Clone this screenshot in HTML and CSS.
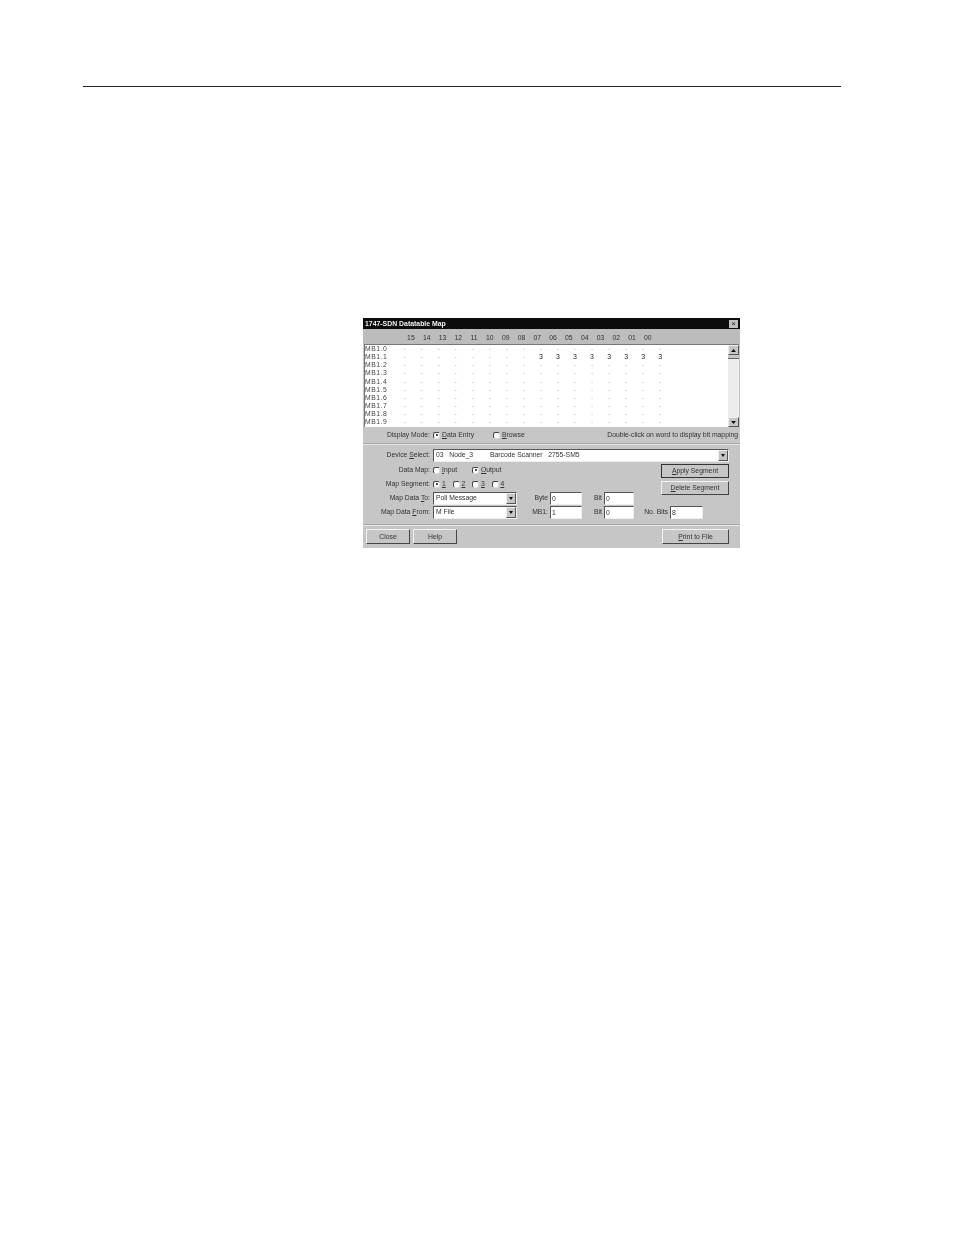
FILE: index.html
```html
<!DOCTYPE html>
<html lang="en">
<head>
<meta charset="utf-8">
<title>1747-SDN Datatable Map</title>
<link rel="stylesheet" href="styles.css">
</head>
<body>
<div class="rule"></div>
<div class="dialog">
  <div class="title"><span>1747-SDN Datatable Map</span><span class="close">×</span></div>
  <div class="head">
    <span>15</span><span>14</span><span>13</span><span>12</span><span>11</span><span>10</span><span>09</span><span>08</span><span>07</span><span>06</span><span>05</span><span>04</span><span>03</span><span>02</span><span>01</span><span>00</span>
  </div>
  <div class="list">
    <div class="rows">
      <div class="row"><span class="lab">MB1.0</span><span>-</span><span>-</span><span>-</span><span>-</span><span>-</span><span>-</span><span>-</span><span>-</span><span>-</span><span>-</span><span>-</span><span>-</span><span>-</span><span>-</span><span>-</span><span>-</span></div>
      <div class="row on"><span class="lab">MB1.1</span><span>-</span><span>-</span><span>-</span><span>-</span><span>-</span><span>-</span><span>-</span><span>-</span><b>3</b><b>3</b><b>3</b><b>3</b><b>3</b><b>3</b><b>3</b><b>3</b></div>
      <div class="row"><span class="lab">MB1.2</span><span>-</span><span>-</span><span>-</span><span>-</span><span>-</span><span>-</span><span>-</span><span>-</span><span>-</span><span>-</span><span>-</span><span>-</span><span>-</span><span>-</span><span>-</span><span>-</span></div>
      <div class="row"><span class="lab">MB1.3</span><span>-</span><span>-</span><span>-</span><span>-</span><span>-</span><span>-</span><span>-</span><span>-</span><span>-</span><span>-</span><span>-</span><span>-</span><span>-</span><span>-</span><span>-</span><span>-</span></div>
      <div class="row"><span class="lab">MB1.4</span><span>-</span><span>-</span><span>-</span><span>-</span><span>-</span><span>-</span><span>-</span><span>-</span><span>-</span><span>-</span><span>-</span><span>-</span><span>-</span><span>-</span><span>-</span><span>-</span></div>
      <div class="row"><span class="lab">MB1.5</span><span>-</span><span>-</span><span>-</span><span>-</span><span>-</span><span>-</span><span>-</span><span>-</span><span>-</span><span>-</span><span>-</span><span>-</span><span>-</span><span>-</span><span>-</span><span>-</span></div>
      <div class="row"><span class="lab">MB1.6</span><span>-</span><span>-</span><span>-</span><span>-</span><span>-</span><span>-</span><span>-</span><span>-</span><span>-</span><span>-</span><span>-</span><span>-</span><span>-</span><span>-</span><span>-</span><span>-</span></div>
      <div class="row"><span class="lab">MB1.7</span><span>-</span><span>-</span><span>-</span><span>-</span><span>-</span><span>-</span><span>-</span><span>-</span><span>-</span><span>-</span><span>-</span><span>-</span><span>-</span><span>-</span><span>-</span><span>-</span></div>
      <div class="row"><span class="lab">MB1.8</span><span>-</span><span>-</span><span>-</span><span>-</span><span>-</span><span>-</span><span>-</span><span>-</span><span>-</span><span>-</span><span>-</span><span>-</span><span>-</span><span>-</span><span>-</span><span>-</span></div>
      <div class="row"><span class="lab">MB1.9</span><span>-</span><span>-</span><span>-</span><span>-</span><span>-</span><span>-</span><span>-</span><span>-</span><span>-</span><span>-</span><span>-</span><span>-</span><span>-</span><span>-</span><span>-</span><span>-</span></div>
    </div>
    <div class="scroll">
      <div class="sbtn"><svg width="7" height="5" viewBox="0 0 7 5"><path d="M3.5 1 L6 4 H1 Z" fill="#111"/></svg></div>
      <div class="thumb"></div>
      <div class="strack"></div>
      <div class="sbtn"><svg width="7" height="5" viewBox="0 0 7 5"><path d="M1 1 H6 L3.5 4 Z" fill="#111"/></svg></div>
    </div>
  </div>

  <div class="mode">
    <span class="lbl">Display Mode:</span>
    <span class="radio dot"></span><span class="opt first"><u>D</u>ata Entry</span>
    <span class="radio"></span><span class="opt"><u>B</u>rowse</span>
    <span class="hint">Double-click on word to display bit mapping</span>
  </div>
  <div class="sep"></div>

  <div class="device">
    <span class="lbl">Device <u>S</u>elect:</span>
    <div class="combo wide"><span class="val">03&nbsp;&nbsp;&nbsp;Node_3&nbsp;&nbsp;&nbsp;&nbsp;&nbsp;&nbsp;&nbsp;&nbsp;&nbsp;Barcode Scanner&nbsp;&nbsp;&nbsp;2755-SM5</span><span class="drop"></span></div>
  </div>

  <div class="form">
    <div class="fields">
      <div class="frow">
        <span class="lbl">Data Map:</span>
        <span class="radio"></span><span class="opt w-input"><u>I</u>nput</span>
        <span class="radio dot"></span><span class="opt"><u>O</u>utput</span>
      </div>
      <div class="frow">
        <span class="lbl">Map Segment:</span>
        <span class="radio dot"></span><span class="opt seg"><u>1</u></span>
        <span class="radio"></span><span class="opt seg"><u>2</u></span>
        <span class="radio"></span><span class="opt seg"><u>3</u></span>
        <span class="radio"></span><span class="opt seg"><u>4</u></span>
      </div>
      <div class="frow ctl">
        <span class="lbl">Map Data <u>T</u>o:</span>
        <div class="combo short"><span class="val">Poll Message</span><span class="drop"></span></div>
        <span class="cap c1">Byte</span><span class="input i1">0</span>
        <span class="cap c2">Bit</span><span class="input i2">0</span>
      </div>
      <div class="frow ctl">
        <span class="lbl">Map Data <u>F</u>rom:</span>
        <div class="combo short"><span class="val">M File</span><span class="drop"></span></div>
        <span class="cap c1">MB1:</span><span class="input i1">1</span>
        <span class="cap c2">Bit</span><span class="input i2">0</span>
        <span class="cap c3">No. Bits</span><span class="input i3">8</span>
      </div>
    </div>
    <div class="actions">
      <div class="btn seg-btn default"><u>A</u>pply Segment</div>
      <div class="btn seg-btn"><u>D</u>elete Segment</div>
    </div>
  </div>
  <div class="sep low"></div>
  <div class="footer">
    <div class="btn small">Close</div>
    <div class="btn small">Help</div>
    <div class="btn print"><u>P</u>rint to File</div>
  </div>
</div>
</body>
</html>
```
FILE: styles.css
```css
html, body { margin: 0; padding: 0; background: #fff; }
body { width: 954px; height: 1235px; overflow: hidden; font-family: "Liberation Sans", Arial, sans-serif; }
.rule { width: 758px; height: 1px; margin: 86px 0 0 83px; background: #222; }
.dialog {
  width: 377px; height: 230px; margin: 231px 0 0 363px; background: #c6c6c6; color: #333;
  font-size: 6.8px; line-height: 8px; filter: blur(0.55px); box-sizing: border-box; overflow: hidden;
}
.title { height: 11px; background: #0c0c0c; color: #efefef; font-weight: 700; font-size: 6.9px; line-height: 11px; padding: 0 2px 0 2px; display: flex; justify-content: space-between; align-items: center; }
.close { width: 9px; height: 8px; background: #c0c0c0; color: #222; line-height: 8px; text-align: center; font-size: 8px; font-weight: 400; }
.head { height: 15px; padding-top: 2px; background: #bcbcbc; display: grid; grid-template-columns: repeat(16, 15.8px); padding-left: 40px; align-items: center; box-sizing: border-box; text-align: center; color: #333; }
.list { height: 83px; margin: 0 1px; background: #fff; display: flex; border-left: 1px solid #777; border-top: 1px solid #777; box-sizing: border-box; }
.rows { flex: 1; }
.row { height: 8.15px; line-height: 8.15px; display: grid; grid-template-columns: 31px repeat(16, 17.05px); text-align: center; color: #b4b4b4; font-size: 6.5px; }
.row.on b { color: #222; font-weight: 400; font-size: 7px; }
.row .lab { color: #444; text-align: left; font-size: 6.8px; letter-spacing: .55px; white-space: nowrap; }
.scroll { width: 11px; display: flex; flex-direction: column; background: #ececec; }
.sbtn { height: 10px; background: #c6c6c6; border: 1px solid; border-color: #eee #555 #555 #eee; box-sizing: border-box; display: flex; align-items: center; justify-content: center; }
.thumb { height: 3px; background: #c6c6c6; border-bottom: 1px solid #666; }
.strack { flex: 1; }
.mode { display: flex; align-items: center; height: 16px; }
.lbl { width: 67px; flex: none; text-align: right; padding-right: 3px; color: #333; white-space: nowrap; }
.radio { width: 5px; height: 5px; flex: none; background: #fff; border: 1px solid; border-color: #444 #ddd #ddd #444; border-radius: 35%; position: relative; }
.radio.dot::after { content: ""; position: absolute; left: 1.5px; top: 1.5px; width: 2px; height: 2px; background: #111; border-radius: 50%; }
.opt { margin-left: 2px; color: #333; }
.opt.first { width: 51px; }
.hint { margin-left: auto; padding-right: 2px; color: #333; white-space: nowrap; }
.sep { height: 1px; background: #e6e6e6; border-top: 1px solid #a8a8a8; }
.device { display: flex; align-items: center; height: 14px; margin-top: 3px; }
.combo { display: flex; height: 13px; background: #fff; border: 1px solid; border-color: #555 #eee #eee #555; box-sizing: border-box; align-items: center; flex: none; color: #333; }
.combo.wide { width: 296px; }
.combo.short { width: 84px; }
.val { flex: 1; padding-left: 2px; white-space: nowrap; }
.drop { width: 10px; height: 100%; background: #c6c6c6; border: 1px solid; border-color: #eee #555 #555 #eee; box-sizing: border-box; display: flex; align-items: center; justify-content: center; }
.drop::after { content: ""; border: 2.5px solid transparent; border-top: 3px solid #111; border-bottom: 0; }
.form { display: flex; margin-top: 1px; }
.fields { width: 298px; flex: none; }
.frow { display: flex; align-items: center; height: 14px; }
.frow:first-child .radio:first-of-type, .frow:nth-child(2) .radio:first-of-type { margin-left: 1px; }
.w-input { width: 30px; }
.seg { width: 10.5px; }
.cap { flex: none; text-align: right; color: #333; padding-right: 2px; box-sizing: border-box; white-space: nowrap; }
.c1 { width: 33px; }
.c2 { width: 22px; }
.c3 { width: 36px; }
.input { flex: none; height: 13px; line-height: 11px; background: #fff; border: 1px solid; border-color: #555 #eee #eee #555; box-sizing: border-box; padding-left: 1px; color: #333; }
.i1 { width: 32px; }
.i2 { width: 30px; }
.i3 { width: 33px; }
.actions { display: flex; flex-direction: column; gap: 3px; padding-top: 1px; }
.btn { background: #c6c6c6; border: 1px solid; border-color: #f2f2f2 #444 #444 #f2f2f2; box-sizing: border-box; text-align: center; color: #333; display: flex; align-items: center; justify-content: center; white-space: nowrap; }
.seg-btn { width: 68px; height: 14px; }
.seg-btn.default { outline: 1px solid #333; outline-offset: -1px; }
.sep.low { margin-top: 5px; }
.footer { display: flex; gap: 3px; padding: 3px 0 0 3px; }
.btn.small { width: 44px; height: 15px; }
.btn.print { width: 67px; height: 15px; margin-left: 202px; }
```
